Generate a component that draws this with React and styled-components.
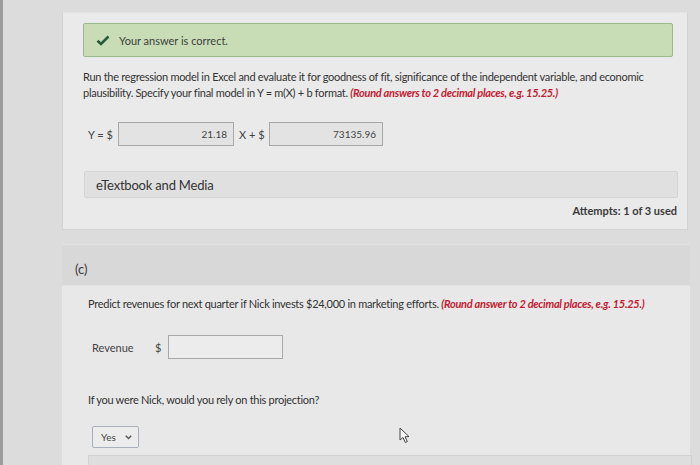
import styled, { createGlobalStyle } from 'styled-components';

const Global = createGlobalStyle`
  html, body {
    margin: 0;
    height: 100%;
    overflow: hidden;
  }
  body {
    background: #dadada;
    font-family: Lato, "Open Sans", sans-serif;
    color: #353535;
  }
`;

const Page = styled.div`
  position: relative;
  height: 465px;
  border-left: 3px solid #9c9c9c;
  padding: 12px 10px 0 59px;
  box-sizing: border-box;
  background: #dcdcdc;
`;

const Panel = styled.section`
  background: #eaeaea;
  border: 1px solid #d2d2d2;
  border-top-color: #e4e4e4;
  padding: 10px 10px 12px 20px;
  width: 626px;
  box-sizing: border-box;
`;

const Correct = styled.div`
  display: flex;
  align-items: center;
  gap: 9px;
  height: 34px;
  width: 590px;
  box-sizing: border-box;
  padding-left: 12px;
  background: #c8ddb5;
  border: 1px solid #9db98b;
  border-radius: 2px;
  font-size: 11px;
  color: #3d3d3d;
`;

const Text = styled.p`
  margin: ${(p) => p.$m || '0'};
  font-size: 11px;
  line-height: 16px;
  color: #333;
  letter-spacing: -0.28px;
`;

const Hint = styled.span`
  color: #c41b32;
  font-weight: 700;
  font-style: italic;
`;

const Row = styled.div`
  display: flex;
  align-items: center;
  gap: ${(p) => p.$gap || '6px'};
  margin: ${(p) => p.$m || '0'};
  padding-left: ${(p) => p.$indent || '0'};
  font-size: 11px;
  color: #444;
`;

const Label = styled.span`
  width: ${(p) => p.$w};
  flex-shrink: 0;
  white-space: nowrap;
`;

const Input = styled.div`
  width: ${(p) => p.$w || '115px'};
  flex-shrink: 0;
  height: 24px;
  box-sizing: border-box;
  border: 1px solid #a8a8a8;
  background: ${(p) => p.$bg || '#e3e3e3'};
  display: flex;
  align-items: center;
  justify-content: flex-end;
  padding-right: 6px;
  font-size: 10px;
  color: #444;
`;

const Media = styled.div`
  margin: 25px 0 0 1px;
  width: 594px;
  height: 27px;
  box-sizing: border-box;
  background: #e0e0e0;
  border: 1px solid #d4d4d4;
  border-radius: 2px;
  display: flex;
  align-items: center;
  padding-left: 11px;
  font-size: 13px;
  color: #333;
  letter-spacing: -0.2px;
`;

const Attempts = styled.div`
  margin-top: 6px;
  text-align: right;
  font-size: 11px;
  font-weight: 700;
  color: #3a3a3a;
  width: 594px;
`;

const PartHeader = styled.div`
  margin-top: 14px;
  height: 42px;
  width: 628px;
  background: #d8d8d8;
  border-top: 1px solid #e2e2e2;
  border-bottom: 1px solid #e2e2e2;
  display: flex;
  align-items: center;
  padding: 8px 0 0 13px;
  box-sizing: border-box;
  font-size: 13px;
  color: #3a3a3a;
`;

const PartBody = styled.div`
  background: #e8e8e8;
  width: 628px;
  box-sizing: border-box;
  padding: 6px 0 0 26px;
  height: 200px;
`;

const Select = styled.div`
  display: flex;
  align-items: center;
  gap: 9px;
  width: 47px;
  height: 22px;
  box-sizing: border-box;
  padding-left: 8px;
  border: 1px solid #a9b0bb;
  border-radius: 2px;
  background: #ececec;
  font-size: 10px;
  color: #444;
  margin: 18px 0 0 4px;
`;

const Next = styled.div`
  margin-top: 7px;
  height: 20px;
  width: 602px;
  background: #dedede;
  border: 1px solid #d0d0d0;
`;

const Cursor = styled.svg`
  position: absolute;
  left: 396px;
  top: 427px;
`;

const Check = () => (
  <svg width="14" height="11" viewBox="0 0 14 11">
    <path d="M1.5 5.8 L5 9 L12.5 1.5" fill="none" stroke="#24593a" strokeWidth="2.6" />
  </svg>
);

const Chevron = () => (
  <svg width="7" height="5" viewBox="0 0 7 5">
    <path d="M0.8 0.8 L3.5 3.6 L6.2 0.8" fill="none" stroke="#555" strokeWidth="1.4" />
  </svg>
);

export default function App() {
  return (
    <>
      <Global />
      <Page>
        <Panel>
          <Correct>
            <Check />
            Your answer is correct.
          </Correct>
          <Text $m="12px 0 0 0">
            Run the regression model in Excel and evaluate it for goodness of fit, significance of the independent variable, and economic
            plausibility. Specify your final model in Y = m(X) + b format.{' '}
            <Hint>(Round answers to 2 decimal places, e.g. 15.25.)</Hint>
          </Text>
          <Row $m="21px 0 0 0" $indent="5px" $gap="5px">
            <Label $w="25px">Y = $</Label>
            <Input $w="116px">21.18</Input>
            <Label $w="25px">X + $</Label>
            <Input $w="114px">73135.96</Input>
          </Row>
          <Media>eTextbook and Media</Media>
          <Attempts>Attempts: 1 of 3 used</Attempts>
        </Panel>
        <PartHeader>(c)</PartHeader>
        <PartBody>
          <Text $m="4px 0 0 0">
            Predict revenues for next quarter if Nick invests $24,000 in marketing efforts.{' '}
            <Hint>(Round answer to 2 decimal places, e.g. 15.25.)</Hint>
          </Text>
          <Row $m="23px 0 0 0" $indent="4px" $gap="0">
            <Label $w="63px">Revenue</Label>
            <Label $w="13px">$</Label>
            <Input $w="115px" $bg="#ececec" />
          </Row>
          <Text $m="33px 0 0 0">If you were Nick, would you rely on this projection?</Text>
          <Select>
            Yes
            <Chevron />
          </Select>
          <Next />
        </PartBody>
        <Cursor width="12" height="17" viewBox="0 0 12 17">
          <path d="M1 1 L1 13 L4 10.5 L6.3 15.5 L8.3 14.6 L6.1 9.8 L10 9.6 Z" fill="#f4f4f4" stroke="#444" strokeWidth="1" />
        </Cursor>
      </Page>
    </>
  );
}
